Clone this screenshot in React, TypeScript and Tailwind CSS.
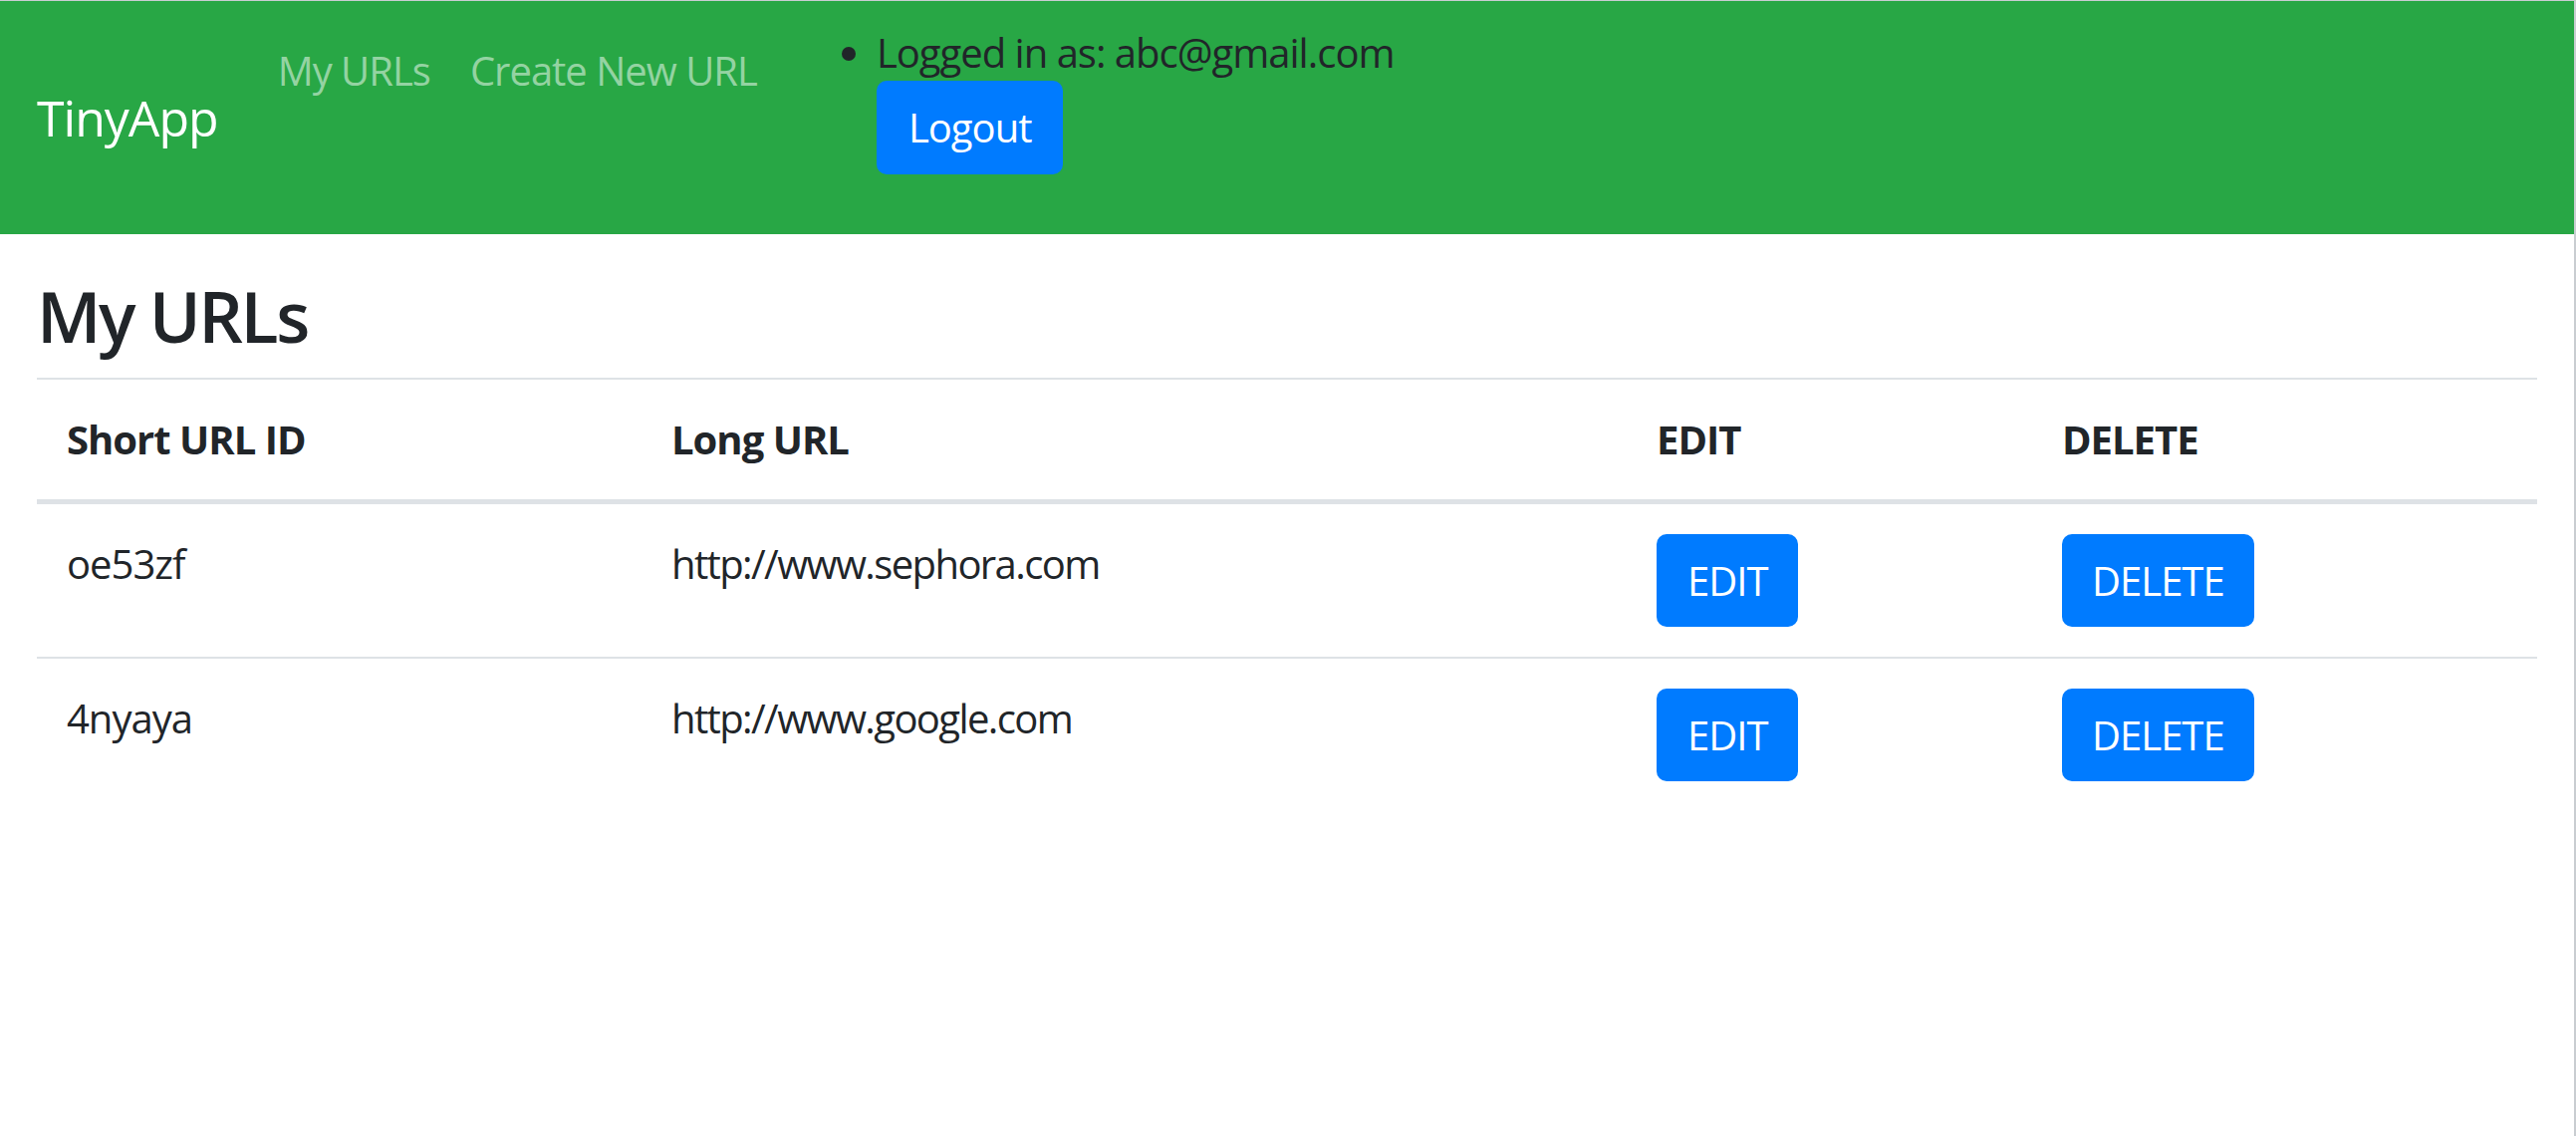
import React from "react";

type UrlRow = {
    id: string
    longUrl: string
}

const urls: UrlRow[] = [
    {id: "oe53zf", longUrl: "http://www.sephora.com"},
    {id: "4nyaya", longUrl: "http://www.google.com"},
]

function Header() {
    return (
        <nav className="flex items-start bg-[#28a745] px-[37px] py-[20px]">
            <a href="#" className="self-center mr-[40px] py-[12px] text-[50px] leading-[1.5] text-white">
                TinyApp
            </a>
            <ul className="flex">
                <li><a href="#" className="block px-[20px] py-[20px] text-[#94d3a2]">My URLs</a></li>
                <li><a href="#" className="block px-[20px] py-[20px] text-[#94d3a2]">Create New URL</a></li>
            </ul>
            <ul className="list-disc pl-[100px] mb-[40px] pt-[2px] marker:text-[#212529]">
                <li>
                    Logged in as: abc@gmail.com
                    <form onSubmit={(e) => e.preventDefault()}>
                        <button type="submit"
                                className="-mt-[2px] block h-[94px] px-[32px] rounded-[10px] bg-[#007bff] text-white leading-[1.5]">
                            Logout
                        </button>
                    </form>
                </li>
            </ul>
        </nav>
    )
}

function UrlTable() {
    return (
        <table className="w-full table-fixed border-collapse">
            <thead>
            <tr className="border-t-2 border-b-[5px] border-[#dee2e6]">
                <th className="w-[607px] p-[30px] text-left font-bold">Short URL ID</th>
                <th className="w-[989px] p-[30px] text-left font-bold">Long URL</th>
                <th className="w-[407px] p-[30px] text-left font-bold">EDIT</th>
                <th className="p-[30px] text-left font-bold">DELETE</th>
            </tr>
            </thead>
            <tbody>
            {urls.map((url, i) => (
                <tr key={url.id} className={i === 0 ? "" : "border-t-2 border-[#dee2e6]"}>
                    <td className="p-[30px] align-top">{url.id}</td>
                    <td className="p-[30px] align-top tracking-[-0.04em]">{url.longUrl}</td>
                    <td className="p-[30px] align-top">
                        <button className="h-[93px] px-[31px] rounded-[10px] bg-[#007bff] text-white">EDIT</button>
                    </td>
                    <td className="p-[30px] align-top">
                        <button className="h-[93px] px-[30px] rounded-[10px] bg-[#007bff] text-white">DELETE</button>
                    </td>
                </tr>
            ))}
            </tbody>
        </table>
    )
}

export default function App() {
    return (
        <div className="min-h-screen w-full border-t border-r-2 border-[#c9cdd1] bg-white font-['Open_Sans',sans-serif] text-[40px] leading-[1.5] tracking-[-0.025em] text-[#212529]">
            <Header/>
            <main className="px-[37px]">
                <h1 className="mt-[40px] mb-[20px] text-[70px] leading-[1.2] font-semibold tracking-[-0.035em]">My URLs</h1>
                <UrlTable/>
            </main>
        </div>
    )
}
